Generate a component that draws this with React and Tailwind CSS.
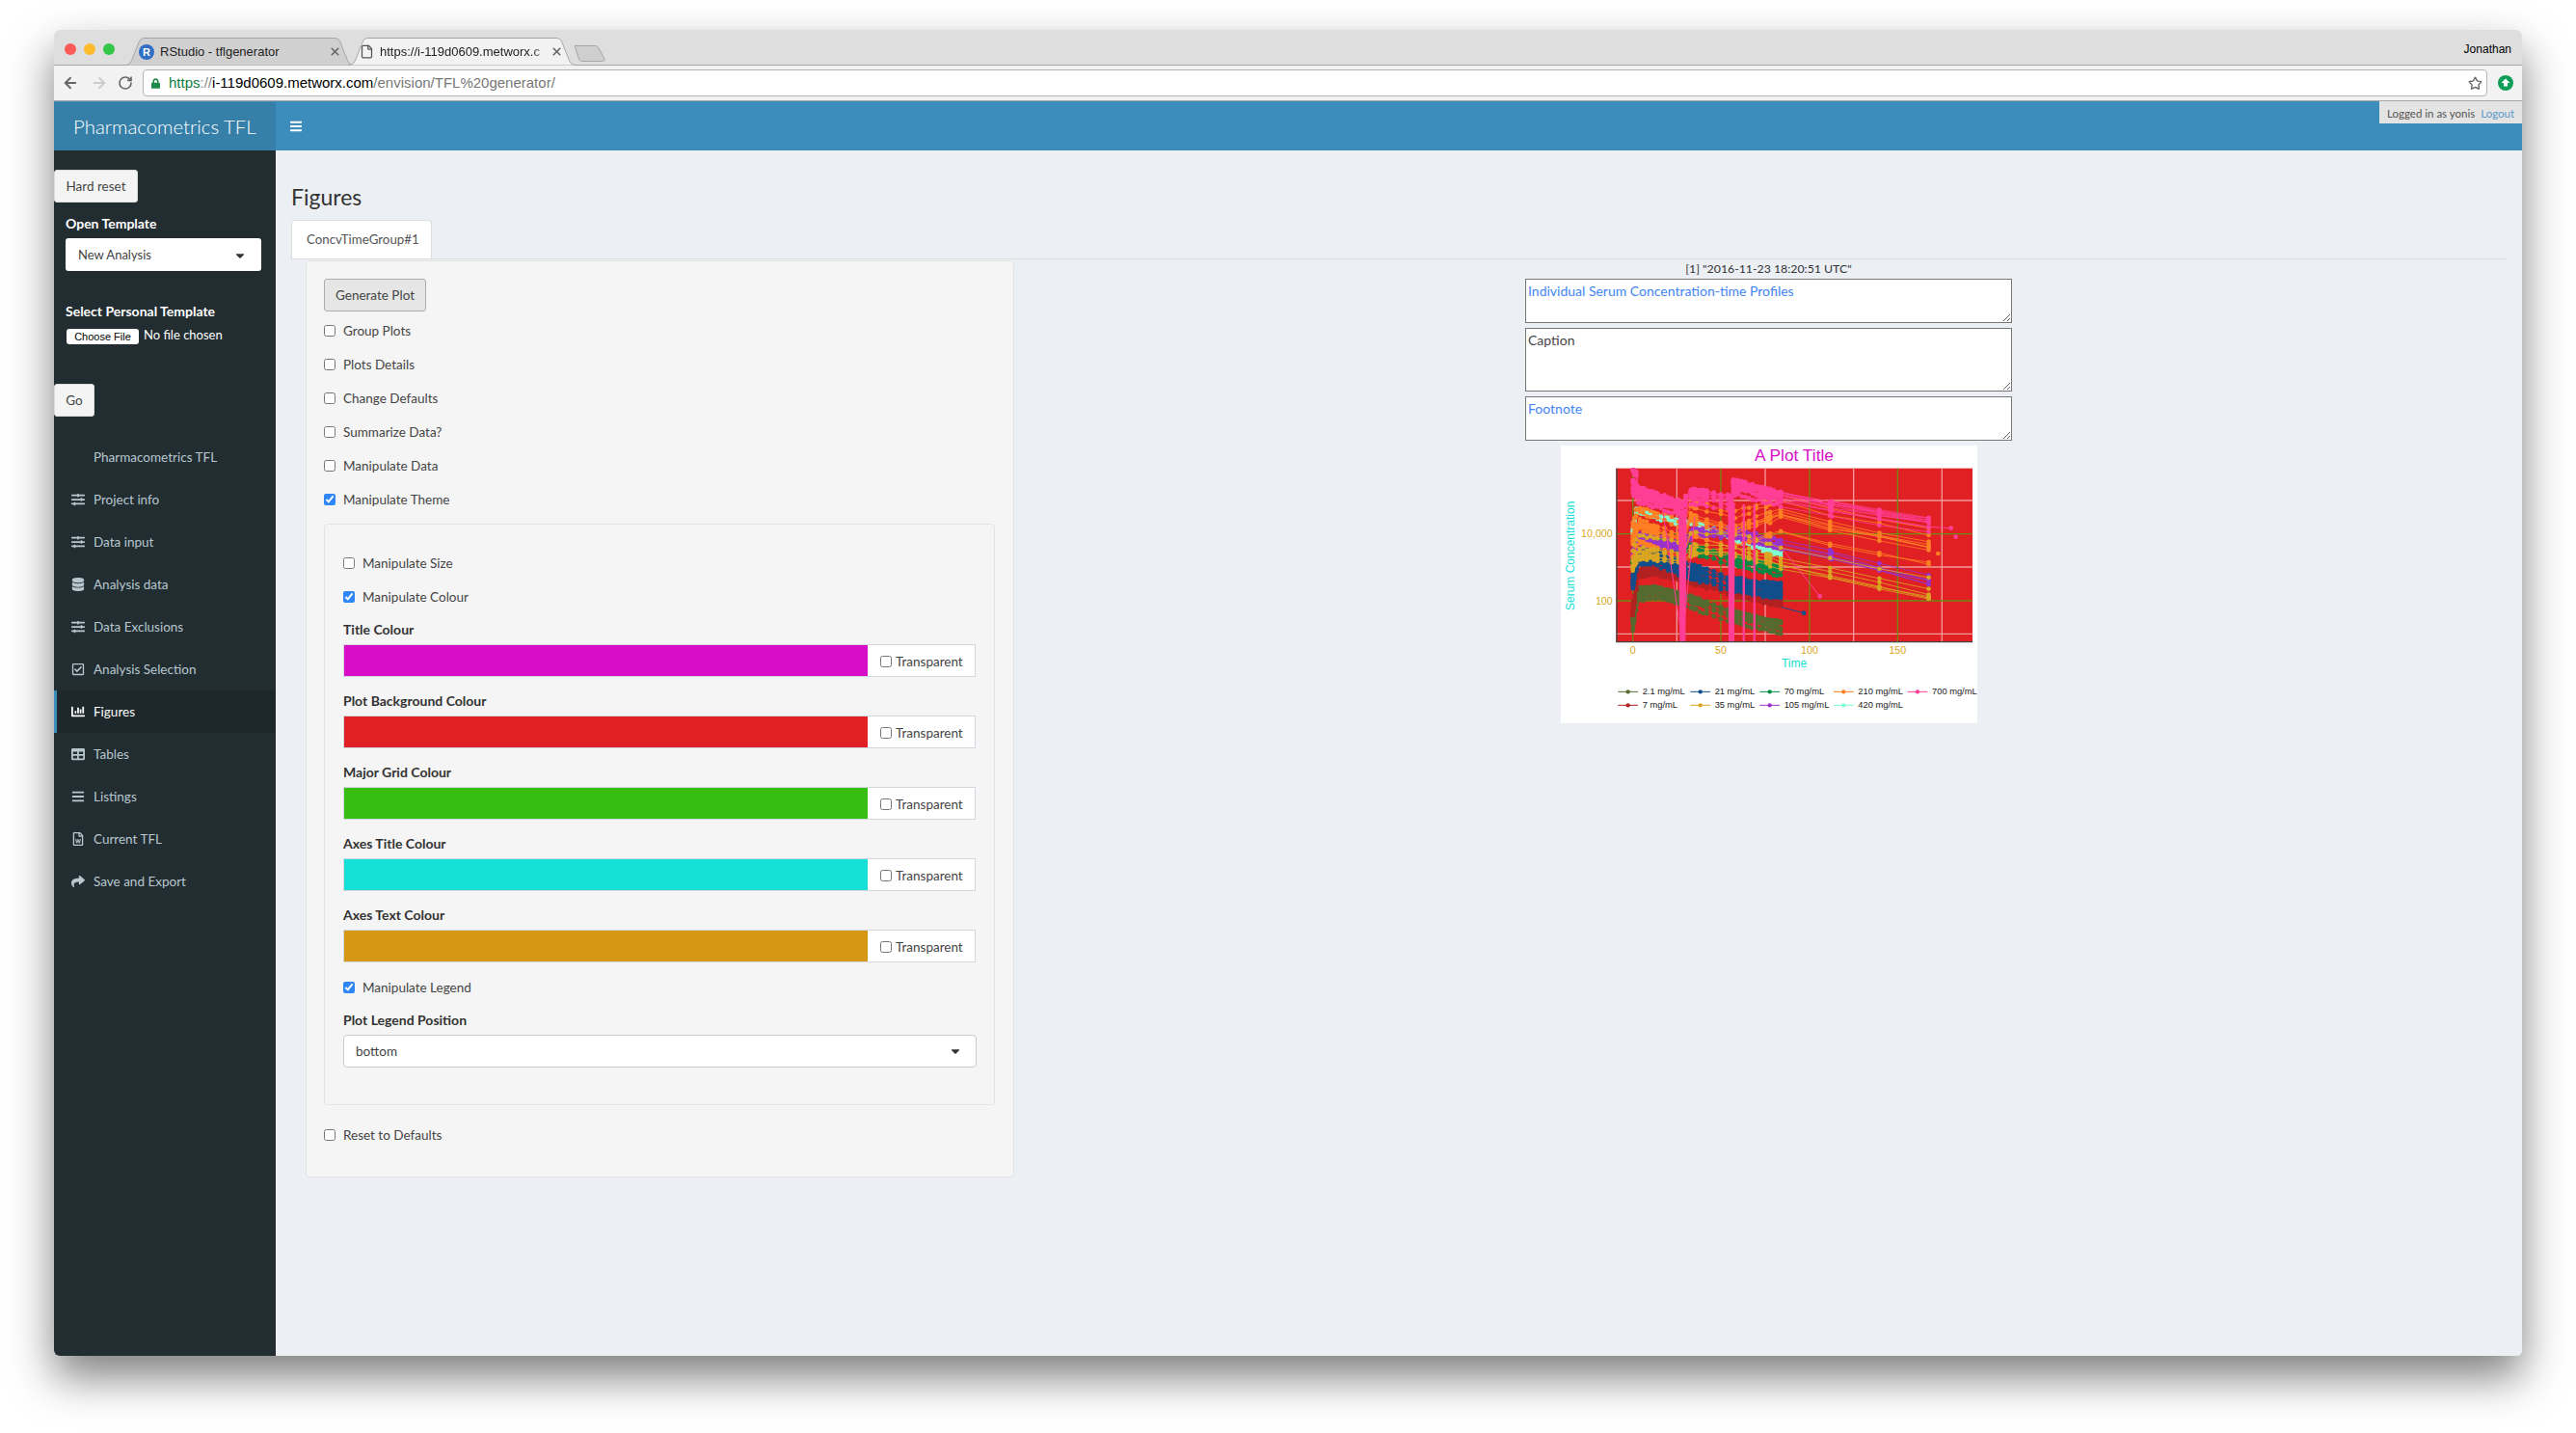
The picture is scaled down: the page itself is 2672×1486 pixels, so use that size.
import { ArrowLeft, ArrowRight, RotateCw, File, Star, X } from "lucide-react";
import {
  FaSlidersH, FaDatabase, FaRegCheckSquare, FaChartBar, FaTable, FaBars, FaRegFileWord, FaShare, FaLock, FaCaretDown,
} from "react-icons/fa";

const menu = [
  { label: "Pharmacometrics TFL" },
  { label: "Project info", icon: FaSlidersH },
  { label: "Data input", icon: FaSlidersH },
  { label: "Analysis data", icon: FaDatabase },
  { label: "Data Exclusions", icon: FaSlidersH },
  { label: "Analysis Selection", icon: FaRegCheckSquare },
  { label: "Figures", icon: FaChartBar, active: true },
  { label: "Tables", icon: FaTable },
  { label: "Listings", icon: FaBars },
  { label: "Current TFL", icon: FaRegFileWord },
  { label: "Save and Export", icon: FaShare },
];

const colours = [
  { label: "Title Colour", swatch: "bg-[#d80dc6]" },
  { label: "Plot Background Colour", swatch: "bg-[#e02022]" },
  { label: "Major Grid Colour", swatch: "bg-[#38bd12]" },
  { label: "Axes Title Colour", swatch: "bg-[#16e0d6]" },
  { label: "Axes Text Colour", swatch: "bg-[#d69814]" },
];

// Plot data: y values are in the svg's own units, interpolated between control points
const groups = [
  { name: "2.1 mg/mL", color: "#556b2f", spread: 22, n: 8, ctrl: [[0, 590], [3, 495], [12, 490], [28, 510], [56, 565], [84, 600]] },
  { name: "7 mg/mL", color: "#b22222", spread: 12, n: 8, ctrl: [[0, 550], [3, 435], [12, 425], [28, 445], [56, 490], [84, 525]] },
  { name: "21 mg/mL", color: "#104e8b", spread: 26, n: 9, ctrl: [[0, 460], [3, 385], [12, 385], [28, 420], [56, 470], [84, 490]] },
  { name: "70 mg/mL", color: "#008b45", spread: 18, n: 8, ctrl: [[0, 400], [3, 325], [12, 335], [28, 350], [56, 390], [84, 425]] },
  { name: "420 mg/mL", color: "#7fffd4", spread: 12, n: 3, ctrl: [[0, 300], [2, 235], [28, 275], [34, 270], [56, 320], [84, 370]] },
  { name: "105 mg/mL", color: "#9932cc", spread: 30, n: 6, ctrl: [[0, 370], [3, 320], [28, 340], [34, 300], [56, 300], [84, 340], [112, 370], [168, 450]] },
  { name: "210 mg/mL", color: "#ff7f24", spread: 70, n: 10, sparse: true, ctrl: [[0, 320], [3, 270], [28, 320], [32, 250], [56, 290], [84, 240], [112, 280], [168, 340]] },
  { name: "35 mg/mL", color: "#daa520", spread: 40, n: 6, sparse: true, ctrl: [[0, 400], [3, 360], [14, 365], [28, 380], [34, 350], [56, 350], [84, 390], [112, 425], [168, 490]] },
  { name: "700 mg/mL", color: "#ff3e96", spread: 22, n: 11, ctrl: [[0, 165], [3, 190], [14, 210], [28, 235], [33, 195], [56, 215], [57, 165], [84, 205], [112, 235], [168, 285]] },
];

const legendOrder = ["2.1 mg/mL", "7 mg/mL", "21 mg/mL", "35 mg/mL", "70 mg/mL", "105 mg/mL", "210 mg/mL", "420 mg/mL", "700 mg/mL"];

const times = [0, 0.25, 0.5, 1, 2, 3, 4, 5, 6, 7, 8, 9, 10, 11, 12, 13, 14, 16, 18, 20, 22, 24, 26, 28, 30, 33, 34, 35, 36, 38, 40, 42, 46, 50, 54, 56, 57, 58, 59, 60, 62, 64, 66, 68, 70, 72, 74, 76, 78, 80, 82, 84, 112, 113, 140, 168];
const sparseTimes = [0, 1, 2, 4, 6, 8, 10, 12, 14, 18, 22, 26, 28, 33, 35, 36, 42, 50, 56, 58, 63, 66, 70, 76, 78, 84, 112, 140, 168];
const spikes = [63, 69];
const tx = (t) => 278 + 5.48 * t;

function seeded(seed) {
  let s = seed;
  return () => {
    s = (s * 1664525 + 1013904223) % 4294967296;
    return s / 4294967296;
  };
}

function valueAt(ctrl, t) {
  for (let i = 1; i < ctrl.length; i++) {
    if (t <= ctrl[i][0]) {
      const [t0, y0] = ctrl[i - 1];
      const [t1, y1] = ctrl[i];
      return y0 + ((y1 - y0) * (t - t0)) / (t1 - t0);
    }
  }
  return null;
}

function buildSeries() {
  const rand = seeded(42);
  return groups.map((g) =>
    Array.from({ length: g.n }, (_, s) => {
      const offset = (rand() - 0.5) * 2 * g.spread;
      const pts = [];
      (g.sparse ? sparseTimes : times).forEach((t) => {
        const v = valueAt(g.ctrl, t);
        if (v === null) return;
        // early peak rises well above the plateau for the top dose
        const peak = g.name === "700 mg/mL" && t < 3 && s % 3 === 0 ? -40 : 0;
        pts.push([tx(t), Math.min(v + offset + peak + (rand() - 0.5) * 10, 648)]);
      });
      return pts;
    })
  );
}

function Plot() {
  const series = buildSeries();
  const legend = [
    [0, 0, 232], [2, 0, 457], [4, 0, 673], [6, 0, 903], [8, 0, 1133],
    [1, 1, 232], [3, 1, 457], [5, 1, 673], [7, 1, 903],
  ];
  const colorOf = (name) => groups.find((g) => g.name === name).color;
  return (
    <svg viewBox="54 37 1296 864" className="w-[432px] h-[288px] bg-white shrink-0" fontFamily="'Liberation Sans', sans-serif">
      <text x="780" y="86" textAnchor="middle" fontSize="52" fill="#d80dc6">A Plot Title</text>
      <rect x="226" y="108" width="1109" height="540" fill="#e02022" />
      {[208, 415, 623].map((y) => <line key={y} x1="226" x2="1335" y1={y} y2={y} stroke="#f29a9a" strokeWidth="4" />)}
      {[415, 690, 965, 1240].map((x) => <line key={x} x1={x} x2={x} y1="108" y2="648" stroke="#f29a9a" strokeWidth="4" />)}
      {[312, 520].map((y) => <line key={y} x1="226" x2="1335" y1={y} y2={y} stroke="#6f8a10" strokeWidth="4" />)}
      {[278, 552, 828, 1102].map((x) => <line key={x} x1={x} x2={x} y1="108" y2="648" stroke="#6f8a10" strokeWidth="4" />)}
      <clipPath id="panel"><rect x="226" y="108" width="1109" height="540" /></clipPath>
      <g clipPath="url(#panel)">
        {series.map((subjects, gi) => (
          <g key={groups[gi].name}>
            {subjects.map((pts, si) => (
              <g key={si} fill={groups[gi].color}>
                <polyline points={pts.map((p) => p.join(",")).join(" ")} fill="none" stroke={groups[gi].color} strokeWidth="2.5" />
                {pts.map((p, i) => <circle key={i} cx={p[0]} cy={p[1]} r="7" />)}
              </g>
            ))}
          </g>
        ))}
        {/* troughs of the top dose dropping to the axis */}
        <path d="M420,240 L446,240 L442,648 L424,648 Z M574,215 L596,215 L594,648 L576,648 Z" fill="#ff3e96" />
        {spikes.map((t) => <polyline key={t} points={`${tx(t)},220 ${tx(t)},648`} fill="none" stroke="#ff3e96" strokeWidth="7" />)}
        <polyline points="370,230 432,648 470,260" fill="none" stroke="#ff3e96" strokeWidth="3" />
        <polyline points="745,360 860,506" fill="none" stroke="#ff3e96" strokeWidth="3" />
        <circle cx="860" cy="506" r="7" fill="#ff3e96" />
        <polyline points="740,540 810,558" fill="none" stroke="#104e8b" strokeWidth="3" />
        <circle cx="810" cy="558" r="7" fill="#104e8b" />
        <polyline points="1200,290 1268,294" fill="none" stroke="#ff3e96" strokeWidth="3" />
        <circle cx="1268" cy="294" r="7" fill="#ff3e96" />
        <circle cx="1283" cy="321" r="7" fill="#ff3e96" />
        <circle cx="1228" cy="373" r="7" fill="#ff7f24" />
      </g>
      <line x1="228" x2="228" y1="108" y2="648" stroke="#444" strokeWidth="4" />
      <line x1="226" x2="1335" y1="648" y2="648" stroke="#444" strokeWidth="4" />
      <g fill="#daa520" fontSize="32">
        <text x="215" y="323" textAnchor="end">10,000</text>
        <text x="215" y="531" textAnchor="end">100</text>
        <text x="278" y="686" textAnchor="middle">0</text>
        <text x="552" y="686" textAnchor="middle">50</text>
        <text x="828" y="686" textAnchor="middle">100</text>
        <text x="1102" y="686" textAnchor="middle">150</text>
      </g>
      <text x="780" y="728" textAnchor="middle" fontSize="36" fill="#16e0d6">Time</text>
      <text transform="translate(96 380) rotate(-90)" textAnchor="middle" fontSize="36" fill="#16e0d6">Serum Concentration</text>
      {legend.map(([g, row, x]) => {
        const y = 803 + row * 42;
        const color = colorOf(legendOrder[g]);
        return (
          <g key={g}>
            <line x1={x} x2={x + 62} y1={y} y2={y} stroke={color} strokeWidth="3" />
            <circle cx={x + 31} cy={y} r="6.5" fill={color} />
            <text x={x + 76} y={y + 9} fontSize="28" fill="#222">{legendOrder[g]}</text>
          </g>
        );
      })}
    </svg>
  );
}

function ChromeTab({ active, width, children }) {
  const d = `M0,28.5 C6,28.5 7,25 9,20 L15,5 C16,2 18,0.5 21,0.5 L${width - 21},0.5 C${width - 18},0.5 ${width - 16},2 ${width - 15},5 L${width - 9},20 C${width - 7},25 ${width - 6},28.5 ${width},28.5`;
  return (
    <div className={`relative h-[29px] -mb-px shrink-0 ${active ? "z-10 w-[237px] -ml-[7px]" : "w-[239px]"}`}>
      <svg viewBox={`0 0 ${width} 29`} className="absolute inset-0 w-full h-full">
        <path d={d} fill={active ? "#f2f2f2" : "#d0d0d0"} stroke="#a6a6a6" />
      </svg>
      <div className="relative flex items-center h-full text-[13px] text-[#222]">{children}</div>
    </div>
  );
}

function BrowserChrome() {
  return (
    <div className="font-['Liberation_Sans',sans-serif]">
      <div className="flex items-end h-[37px] bg-[#dedede] border-b border-[#a6a6a6] rounded-t-[6px] pl-[73px] pr-[11px] relative">
        <div className="absolute left-[11px] top-[14px] flex gap-2">
          <span className="w-3 h-3 rounded-full bg-[#fc5b57]" />
          <span className="w-3 h-3 rounded-full bg-[#fdbb2d]" />
          <span className="w-3 h-3 rounded-full bg-[#32c748]" />
        </div>
        <ChromeTab width={239}>
          <svg viewBox="0 0 16 16" className="w-4 h-4 ml-[15px] mr-[6px] shrink-0">
            <circle cx="8" cy="8" r="8" fill="#2f6fc4" />
            <text x="8" y="12" textAnchor="middle" fontSize="11" fontWeight="700" fill="#fff">R</text>
          </svg>
          <span className="w-[175px]">RStudio - tflgenerator</span>
          <X className="w-[13px] h-[13px] text-[#666]" strokeWidth={3} />
        </ChromeTab>
        <ChromeTab active width={237}>
          <File className="w-[15px] h-[15px] ml-[12px] mr-[6px] shrink-0 text-[#555]" />
          <span className="w-[173px] overflow-hidden whitespace-nowrap [mask-image:linear-gradient(to_left,transparent,black_14px)]">https://i-119d0609.metworx.c</span>
          <X className="w-[13px] h-[13px] ml-[4px] text-[#666]" strokeWidth={3} />
        </ChromeTab>
        <svg viewBox="0 0 33 17" className="w-[33px] h-[17px] mb-[3px] -ml-[3px]">
          <path d="M1,0.5 L22,0.5 C24,0.5 25,1 26,3 L32,14 C32.5,16 31,16.5 30,16.5 L9,16.5 C7,16.5 6,16 5.5,14 Z" fill="#cfcfcf" stroke="#a6a6a6" />
        </svg>
        <span className="ml-auto self-center mt-[4px] text-[12px] text-black">Jonathan</span>
      </div>
      <div className="flex items-center h-[37px] bg-[#f2f2f2] border-b border-[#a6a6a6] pl-[8px] pr-[9px]">
        <ArrowLeft className="w-[18px] h-[18px] text-[#666]" strokeWidth={2.5} />
        <ArrowRight className="w-[18px] h-[18px] ml-[12px] text-[#ccc]" strokeWidth={2.5} />
        <RotateCw className="w-[16px] h-[16px] ml-[10px] text-[#666]" strokeWidth={2.5} />
        <div className="flex items-center flex-1 h-[28px] ml-[10px] bg-white border border-[#b4b4b4] rounded-[4px] pl-[8px] pr-[4px] text-[15px]">
          <FaLock className="w-[9px] h-[11px] text-[#1d8a4a] mr-[9px]" />
          <span className="text-[#0b7d3e]">https</span>
          <span className="text-[#888]">://</span>
          <span className="text-black">i-119d0609.metworx.com</span>
          <span className="text-[#777]">/envision/TFL%20generator/</span>
          <Star className="w-[15px] h-[15px] ml-auto text-[#666]" strokeWidth={2.2} />
        </div>
        <svg viewBox="0 0 16 16" className="w-4 h-4 ml-[11px]">
          <circle cx="8" cy="8" r="8" fill="#0f9d58" />
          <path d="M8,3.5 L12.5,8 H10 V11.5 H6 V8 H3.5 Z" fill="#fff" />
        </svg>
      </div>
    </div>
  );
}

function Sidebar() {
  return (
    <aside className="w-[230px] shrink-0 bg-[#222d32] pt-[20px] rounded-bl-[6px]">
      <button className="block w-[87px] h-[34px] bg-[#f4f4f4] border border-[#ddd] rounded-[3px] text-[#444]">Hard reset</button>
      <div className="px-[12px]">
        <div className="mt-[12px] h-[20px] leading-[20px] text-[14px] font-bold text-white">Open Template</div>
        <div className="mt-[5px] h-[34px] w-[203px] flex items-center justify-between bg-white rounded-[3px] pl-[13px] pr-[15px] pt-px text-[13px] text-[#444]">
          New Analysis
          <FaCaretDown className="w-[14px] h-[14px] text-[#333]" />
        </div>
        <div className="mt-[32px] h-[20px] leading-[20px] text-[14px] font-bold text-white">Select Personal Template</div>
        <div className="mt-[8px] h-[16px] flex items-center">
          <span className="ml-[1px] w-[75px] h-[16px] flex items-center justify-center bg-white rounded-[3px] font-['Liberation_Sans',sans-serif] text-[11px] text-black">Choose File</span>
          <span className="ml-[5px] text-white text-[13px] -mt-[2px]">No file chosen</span>
        </div>
      </div>
      <button className="block mt-[41px] w-[42px] h-[34px] bg-[#f4f4f4] border border-[#ddd] rounded-[3px] text-[#444]">Go</button>
      <ul className="mt-[20px]">
        {menu.map((item) => {
          const Icon = item.icon;
          return (
            <li key={item.label} className={`flex items-center h-[44px] border-l-[3px] ${item.active ? "bg-[#1e282c] border-[#3c8dbc] text-white" : "border-transparent text-[#b8c7ce]"}`}>
              <span className="w-[38px] pl-[15px] shrink-0">{Icon && <Icon className="w-[14px] h-[14px]" />}</span>
              {item.label}
            </li>
          );
        })}
      </ul>
    </aside>
  );
}

function CheckRow({ label, checked }) {
  return (
    <label className="flex items-center h-[35px]">
      <input type="checkbox" readOnly checked={!!checked} className="w-[12px] h-[12px] m-0 accent-[#2f86f6]" />
      <span className="ml-[8px] pt-px text-[#444]">{label}</span>
    </label>
  );
}

function FieldLabel({ children }) {
  return <div className="h-[20px] leading-[20px] mb-[5px] text-[14px] font-bold text-[#333]">{children}</div>;
}

function Caption({ h, blue, children }) {
  return (
    <textarea
      readOnly
      defaultValue={children}
      className={`w-[505px] ${h} shrink-0 bg-white border border-[#777] px-[2px] pt-[3px] pb-0 text-[14px] leading-[18px] block ${blue ? "text-[#4285f4]" : "text-[#444]"}`}
    />
  );
}

export default function App() {
  return (
    <div className="h-[1486px] overflow-hidden bg-white pt-[31px] px-[56px] text-[13.5px] font-['Lato',sans-serif]">
      <div className="h-[1375px] flex flex-col rounded-[6px] shadow-[0_22px_45px_rgba(0,0,0,0.5)]">
        <BrowserChrome />
        <header className="relative flex h-[51px] pt-px bg-[#3c8dbc] shrink-0">
          <div className="w-[230px] bg-[#367fa9] flex items-center pl-[20px] text-[20.4px] font-light text-white">Pharmacometrics TFL</div>
          <FaBars className="self-center ml-[15px] w-[12px] h-[14px] text-white" />
          <div className="absolute right-0 top-0 w-[148px] h-[23px] flex items-center bg-[#e4e4e4] pl-[8px] pt-[2px] text-[11.5px] text-[#555]">
            Logged in as yonis
            <span className="ml-[6px] text-[#5a9ac8]">Logout</span>
          </div>
        </header>
        <div className="flex flex-1 min-h-0">
          <Sidebar />
          <main className="flex-1 bg-[#ecf0f5] rounded-br-[6px] px-[16px] text-[#333]">
            <h1 className="h-[72px] pt-[24px] flex items-center text-[23px] leading-none text-[#333]">Figures</h1>
            <div className="w-[146px] h-[40px] flex items-center pl-[15px] bg-white border border-b-0 border-[#ddd] rounded-t-[4px] text-[13.3px] text-[#555]">ConcvTimeGroup#1</div>
            <div className="border-t border-[#ddd] pl-[15px] pt-px flex items-start">
              <section className="w-[735px] shrink-0 h-[951px] bg-[#f5f5f5] border border-[#e3e3e3] rounded-[4px] px-[18px] pt-[18px]">
                <button className="block w-[106px] h-[34px] bg-[#e6e6e6] border border-[#adadad] rounded-[3px] text-[#444]">Generate Plot</button>
                <div className="mt-[2px]">
                  <CheckRow label="Group Plots" />
                  <CheckRow label="Plots Details" />
                  <CheckRow label="Change Defaults" />
                  <CheckRow label="Summarize Data?" />
                  <CheckRow label="Manipulate Data" />
                  <CheckRow label="Manipulate Theme" checked />
                </div>
                <div className="mt-[8px] w-[696px] h-[603px] border border-[#e3e3e3] rounded-[4px] px-[19px] pt-[22px]">
                  <CheckRow label="Manipulate Size" />
                  <CheckRow label="Manipulate Colour" checked />
                  <div className="mt-[7px] flex flex-col gap-[15px]">
                    {colours.map((c) => (
                      <div key={c.label}>
                        <FieldLabel>{c.label}</FieldLabel>
                        <div className="flex h-[34px] border border-[#d2d6de] bg-white">
                          <div className={`w-[543px] ${c.swatch}`} />
                          <label className="flex items-center pl-[13px] pt-[2px] text-[#444]">
                            <input type="checkbox" readOnly checked={false} className="w-[12px] h-[12px] m-0" />
                            <span className="ml-[4px] text-[13.5px]">Transparent</span>
                          </label>
                        </div>
                      </div>
                    ))}
                  </div>
                  <div className="mt-[8px]"><CheckRow label="Manipulate Legend" checked /></div>
                  <div className="mt-[7px]">
                    <FieldLabel>Plot Legend Position</FieldLabel>
                    <div className="flex items-center justify-between h-[34px] w-[657px] bg-white border border-[#ccc] rounded-[4px] pl-[12px] pr-[14px] text-[#444]">
                      bottom
                      <FaCaretDown className="w-[14px] h-[14px] text-[#333]" />
                    </div>
                  </div>
                </div>
                <div className="mt-[13px]"><CheckRow label="Reset to Defaults" /></div>
              </section>
              <section className="ml-[530px] w-[505px] flex flex-col items-center gap-[5px]">
                <div className="h-[18px] -mb-[4px] leading-[18px] text-[12.3px] text-[#333]">[1] "2016-11-23 18:20:51 UTC"</div>
                <Caption h="h-[46px]" blue>Individual Serum Concentration-time Profiles</Caption>
                <Caption h="h-[66px]">Caption</Caption>
                <Caption h="h-[46px]" blue>Footnote</Caption>
                <Plot />
              </section>
            </div>
          </main>
        </div>
      </div>
    </div>
  );
}
